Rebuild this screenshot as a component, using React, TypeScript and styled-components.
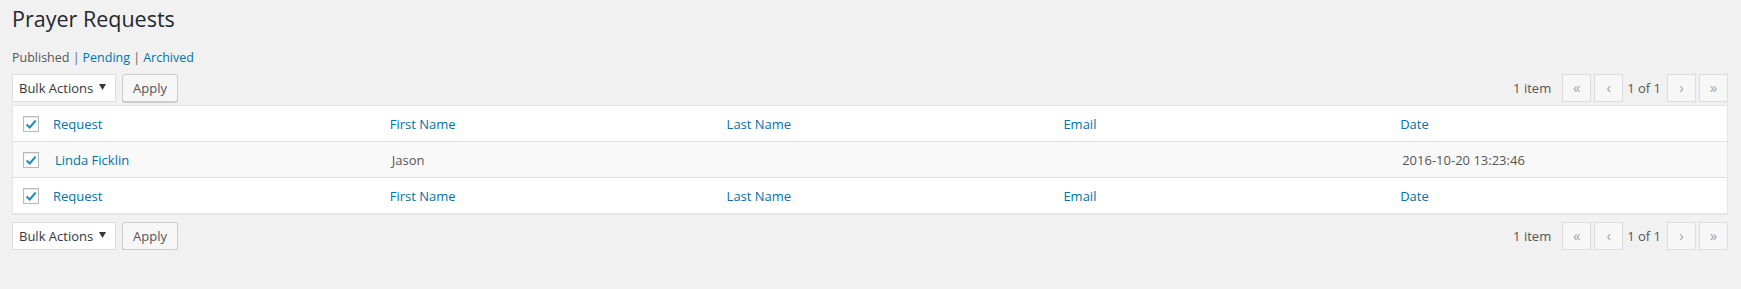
import React from "react";
import styled, { createGlobalStyle } from "styled-components";

const GlobalStyle = createGlobalStyle`
  html, body {
    margin: 0;
    padding: 0;
    background: #f1f1f1;
  }
  body {
    font-family: "Open Sans", "Noto Sans", sans-serif;
    font-size: 13px;
    color: #444;
  }
`;

const Wrap = styled.div`
  padding: 0 13px 0 12px;
`;

const Title = styled.h1`
  margin: 0;
  padding: 4px 0 0;
  font-size: 21.5px;
  font-weight: 400;
  line-height: 29px;
  color: #23282d;
`;

const Views = styled.ul`
  list-style: none;
  margin: 15px 0 0;
  padding: 0;
  display: flex;
  gap: 3px;
  font-size: 12.5px;
  line-height: 20px;
  color: #666;
`;

const ViewItem = styled.li`
  white-space: pre;
`;

const ViewLink = styled.a<{ $current?: boolean }>`
  color: ${(p) => (p.$current ? "#555" : "#0073aa")};
  text-decoration: none;
`;

const TableNav = styled.div<{ $top?: boolean }>`
  display: flex;
  justify-content: space-between;
  align-items: center;
  height: 28px;
  margin: ${(p) => (p.$top ? "6px 0 3px" : "8px 0 0")};
`;

const Actions = styled.div`
  display: flex;
  gap: 6px;
`;

const Select = styled.div`
  box-sizing: border-box;
  width: 104px;
  height: 28px;
  background: #fff;
  border: 1px solid #ddd;
  display: flex;
  align-items: center;
  justify-content: space-between;
  padding: 0 9px 0 6px;
  color: #32373c;
  font-size: 13px;
`;

const Caret = styled.svg`
  margin-top: -3px;
`;

const Button = styled.button`
  box-sizing: border-box;
  height: 28px;
  padding: 0 10px 1px;
  background: #f7f7f7;
  border: 1px solid #ccc;
  border-radius: 3px;
  box-shadow: 0 1px 0 #ccc;
  color: #555;
  font-family: inherit;
  font-size: 13px;
`;

const Pagination = styled.div`
  display: flex;
  align-items: center;
  color: #555;
`;

const Count = styled.span`
  margin-right: 11px;
`;

const PageButton = styled.span`
  box-sizing: border-box;
  width: 29px;
  height: 28px;
  display: flex;
  align-items: center;
  justify-content: center;
  background: #f7f7f7;
  border: 1px solid #ddd;
  color: #a0a5aa;
  font-size: 15px;
  padding-bottom: 2px;
  & + & {
    margin-left: 3px;
  }
`;

const PageText = styled.span`
  margin: 0 6px 0 4px;
`;

const Table = styled.table`
  width: 100%;
  border-spacing: 0;
  border-collapse: separate;
  table-layout: fixed;
  background: #fff;
  border: 1px solid #e5e5e5;
  box-shadow: 0 1px 1px rgba(0, 0, 0, 0.04);
`;

const HeadCell = styled.th<{ $foot?: boolean }>`
  height: 35px;
  padding: 0 10px;
  text-align: left;
  font-weight: 400;
  font-size: 13px;
  border-${(p) => (p.$foot ? "top" : "bottom")}: 1px solid #e1e1e1;
`;

const CheckHead = styled(HeadCell)`
  padding-right: 0;
`;

const CheckCell = styled.td`
  padding: 0 0 0 10px;
  vertical-align: middle;
`;

const BodyRow = styled.tr`
  background: #f9f9f9;
`;

const Cell = styled.td`
  height: 35px;
  padding: 0 12px;
  color: #555;
  font-size: 13px;
`;

const HeadLink = styled.a`
  color: #0073aa;
  text-decoration: none;
`;

const Box = styled.span`
  box-sizing: border-box;
  width: 16px;
  height: 16px;
  display: flex;
  align-items: center;
  justify-content: center;
  background: #fff;
  border: 1px solid #b4b9be;
  box-shadow: inset 0 1px 2px rgba(0, 0, 0, 0.1);
`;

function Check() {
  return (
    <Box>
      <svg width="14" height="14" viewBox="0 0 14 14">
        <path d="M2.6 7.4l3.1 3L11.6 3.6" fill="none" stroke="#1e8cbe" strokeWidth="2.1" />
      </svg>
    </Box>
  );
}

const columns = ["Request", "First Name", "Last Name", "Email", "Date"];

function HeadRow({ foot }: { foot?: boolean }) {
  return (
    <tr>
      <CheckHead as="td" $foot={foot}>
        <Check />
      </CheckHead>
      {columns.map((c) => (
        <HeadCell key={c} $foot={foot}>
          <HeadLink href="#">{c}</HeadLink>
        </HeadCell>
      ))}
    </tr>
  );
}

function Nav({ top }: { top?: boolean }) {
  return (
    <TableNav $top={top}>
      <Actions>
        <Select>
          <span>Bulk Actions</span>
          <Caret width="7" height="6" viewBox="0 0 7 6">
            <path d="M0 0h7L3.5 6z" fill="#32373c" />
          </Caret>
        </Select>
        <Button>Apply</Button>
      </Actions>
      <Pagination>
        <Count>1 item</Count>
        <PageButton>«</PageButton>
        <PageButton>‹</PageButton>
        <PageText>1 of 1</PageText>
        <PageButton>›</PageButton>
        <PageButton>»</PageButton>
      </Pagination>
    </TableNav>
  );
}

export default function App() {
  return (
    <>
      <GlobalStyle />
      <Wrap>
        <Title>Prayer Requests</Title>
        <Views>
          <ViewItem>
            <ViewLink $current>Published</ViewLink> |
          </ViewItem>
          <ViewItem>
            <ViewLink href="#">Pending</ViewLink> |
          </ViewItem>
          <ViewItem>
            <ViewLink href="#">Archived</ViewLink>
          </ViewItem>
        </Views>
        <Nav top />
        <Table>
          <colgroup>
            <col style={{ width: 30 }} />
            {columns.map((c) => (
              <col key={c} />
            ))}
          </colgroup>
          <thead>
            <HeadRow />
          </thead>
          <tbody>
            <BodyRow>
              <CheckCell>
                <Check />
              </CheckCell>
              <Cell>
                <HeadLink href="#">Linda Ficklin</HeadLink>
              </Cell>
              <Cell>Jason</Cell>
              <Cell />
              <Cell />
              <Cell>2016-10-20 13:23:46</Cell>
            </BodyRow>
          </tbody>
          <tfoot>
            <HeadRow foot />
          </tfoot>
        </Table>
        <Nav />
      </Wrap>
    </>
  );
}
